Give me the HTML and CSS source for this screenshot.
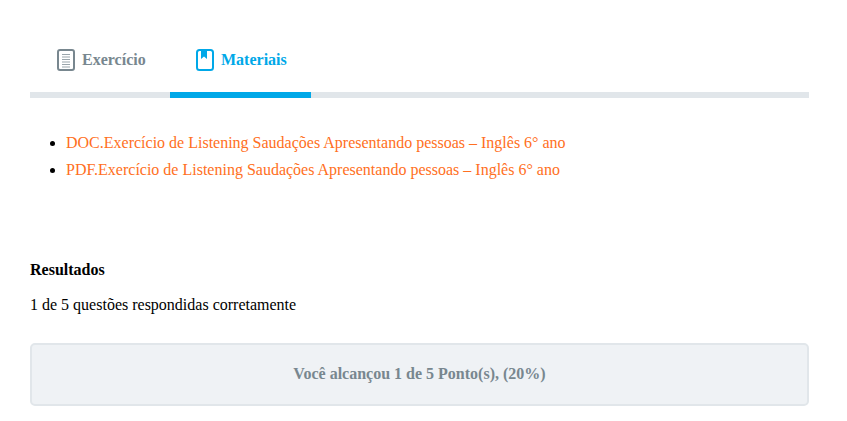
FILE: index.html
```html
<!DOCTYPE html>
<html lang="pt">
<head>
    <meta charset="UTF-8">
    <meta name="viewport" content="width=device-width, initial-scale=1.0">
    <title>Exercício</title>
    <link rel="stylesheet" href="styles.css">
</head>
<body>
    <div class="container">
        <div class="tabs">
            <div class="tab">
                <svg class="tab-icon" width="18" height="22" viewBox="0 0 18 22" fill="none">
                    <rect x="1" y="1" width="16" height="20" rx="2" stroke="#78878f" stroke-width="2"/>
                    <path d="M5 5.5h8M5 8h8M5 10.5h8M5 13h8M5 15.5h8M5 18h8" stroke="#9aa5ab" stroke-width="1"/>
                </svg>
                <span>Exercício</span>
            </div>
            <div class="tab active">
                <svg class="tab-icon" width="18" height="22" viewBox="0 0 18 22" fill="none">
                    <rect x="1" y="1" width="16" height="20" rx="2.5" stroke="#00a8e8" stroke-width="2"/>
                    <path d="M5 1h6v9l-3-2.5L5 10z" fill="#00a8e8"/>
                </svg>
                <span>Materiais</span>
            </div>
        </div>

        <ul class="materials">
            <li><a href="#">DOC.Exercício de Listening Saudações Apresentando pessoas – Inglês 6° ano</a></li>
            <li><a href="#">PDF.Exercício de Listening Saudações Apresentando pessoas – Inglês 6° ano</a></li>
        </ul>

        <div class="results-title">Resultados</div>
        <p class="results-text">1 de 5 questões respondidas corretamente</p>
        <div class="score">Você alcançou 1 de 5 Ponto(s), (20%)</div>
    </div>
</body>
</html>
```

FILE: styles.css
```css
html, body {
    height: 100%;
    overflow: hidden;
}

body {
    margin: 0;
    background: white;
    color: black;
    font-family: "Liberation Serif", "Times New Roman", serif;
    font-size: 16px;
}

.container {
    padding: 32px 38px 0 30px;
}

.tabs {
    display: flex;
    height: 60px;
    border-bottom: 6px solid #e1e6ea;
}

.tab {
    display: flex;
    align-items: center;
    gap: 7px;
    width: 140px;
    height: 66px;
    padding: 0 0 4px 27px;
    box-sizing: border-box;
    border-bottom: 6px solid transparent;
    color: #78878f;
    font-weight: bold;
}

.tab.active {
    width: 141px;
    padding-left: 26px;
    color: #00a8e8;
    border-bottom-color: #00a8e8;
}

.tab-icon {
    flex: none;
}

.materials {
    margin: 31px 0 0;
    padding-left: 36px;
    line-height: 27px;
}

.materials a {
    color: #ff6f22;
    text-decoration: none;
}

.results-title {
    margin-top: 77px;
    font-weight: bold;
    line-height: 20px;
}

.results-text {
    margin: 15px 0 0;
    line-height: 20px;
}

.score {
    margin-top: 28px;
    height: 63px;
    padding-bottom: 2px;
    box-sizing: border-box;
    display: flex;
    align-items: center;
    justify-content: center;
    background: #eff2f5;
    border: 2px solid #e1e6ea;
    border-radius: 5px;
    color: #78878f;
    font-weight: bold;
}
```
